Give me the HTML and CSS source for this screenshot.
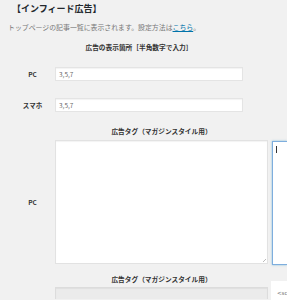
FILE: index.html
```html
<!DOCTYPE html>
<html lang="ja">
<head>
<meta charset="utf-8">
<link rel="stylesheet" href="styles.css">
</head>
<body>
<div class="page">
  <div class="main">
    <h2 class="title">【インフィード広告】</h2>
    <p class="desc">トップページの記事一覧に表示されます。設定方法は<a class="link" href="#">こちら</a>。</p>
    <div class="sub sub-first">広告の表示箇所［半角数字で入力］</div>
    <div class="row row-input">
      <div class="label">PC</div>
      <div class="field"><div class="input">3,5,7</div></div>
    </div>
    <div class="row row-input row-second">
      <div class="label">スマホ</div>
      <div class="field"><div class="input">3,5,7</div></div>
    </div>
    <div class="row row-head">
      <div class="label"></div>
      <div class="sub">広告タグ（マガジンスタイル用）</div>
    </div>
    <div class="row row-ta">
      <div class="label">PC</div>
      <div class="field"><div class="textarea"><span class="grip"></span></div></div>
    </div>
    <div class="row row-head row-head2">
      <div class="label"></div>
      <div class="sub">広告タグ（マガジンスタイル用）</div>
    </div>
    <div class="row row-ta2">
      <div class="label"></div>
      <div class="field"><div class="textarea disabled"></div></div>
    </div>
  </div>
  <div class="side">
    <div class="focus-ta"><span class="caret"></span></div>
    <div class="code">&lt;sc</div>
  </div>
</div>
</body>
</html>
```
FILE: styles.css
```css
html, body {
  margin: 0;
  padding: 0;
  background: #f1f1f1;
  overflow: hidden;
}
body {
  font-family: "Noto Sans CJK JP", "Noto Sans", sans-serif;
  color: #444;
  width: 287px;
  height: 300px;
}
.page {
  display: flex;
  width: 287px;
  height: 300px;
  overflow: hidden;
}
.main {
  width: 270px;
  flex-shrink: 0;
}
.title {
  margin: 3px 0 0 12px;
  font-size: 9px;
  line-height: 12px;
  font-weight: bold;
  color: #23282d;
}
.desc {
  margin: 7px 0 0 8px;
  font-size: 6.9px;
  line-height: 10px;
  color: #777;
}
.link {
  color: #0073aa;
  text-decoration: underline;
}
.sub {
  font-size: 6.7px;
  line-height: 10px;
  font-weight: bold;
  color: #333;
  text-align: center;
}
.sub-first {
  margin-top: 10px;
  width: 278px;
}
.row {
  display: grid;
  grid-template-columns: 55px 213px;
  align-items: center;
}
.label {
  padding-left: 10px;
  text-align: center;
  font-size: 6.5px;
  font-weight: bold;
  color: #333;
}
.row-input {
  margin-top: 15px;
}
.row-second {
  margin-top: 17px;
}
.input {
  width: 188px;
  height: 14px;
  box-sizing: border-box;
  background: #fff;
  border: 1px solid #e4e4e4;
  box-shadow: inset 0 1px 1px rgba(0,0,0,0.05);
  font-size: 6.5px;
  line-height: 12px;
  padding-left: 3px;
  color: #666;
}
.row-head {
  margin-top: 14px;
}
.row-ta {
  margin-top: 4px;
}
.textarea {
  position: relative;
  width: 213px;
  height: 124px;
  box-sizing: border-box;
  background: #fff;
  border: 1px solid #e2e2e2;
  box-shadow: inset 0 1px 1px rgba(0,0,0,0.05);
}
.grip {
  position: absolute;
  right: 1px;
  bottom: 1px;
  width: 3px;
  height: 3px;
  background: linear-gradient(135deg, transparent 50%, #bbb 50%, #bbb 65%, transparent 65%);
}
.textarea.disabled {
  background: #ebebeb;
  border-color: #dcdcdc;
  border-bottom: none;
  height: 12px;
}
.row-head2 {
  margin-top: 10px;
}
.row-ta2 {
  margin-top: 3px;
}
.side {
  flex: 1;
  min-width: 0;
  padding-top: 141px;
  display: flex;
  flex-direction: column;
}
.focus-ta {
  margin-left: 2px;
  height: 124px;
  box-sizing: border-box;
  background: #fff;
  border: 1px solid #7eaede;
  border-right: none;
  box-shadow: 0 0 2px rgba(30,140,190,0.5);
  position: relative;
}
.caret {
  position: absolute;
  left: 3px;
  top: 4px;
  width: 1px;
  height: 7px;
  background: #333;
}
.code {
  margin-top: 16px;
  margin-left: 1px;
  flex: 1;
  background: #fff;
  font-size: 5.5px;
  line-height: 10px;
  padding: 7px 0 0 6px;
  color: #777;
  font-family: "DejaVu Sans", sans-serif;
  overflow: hidden;
  white-space: nowrap;
}
```
